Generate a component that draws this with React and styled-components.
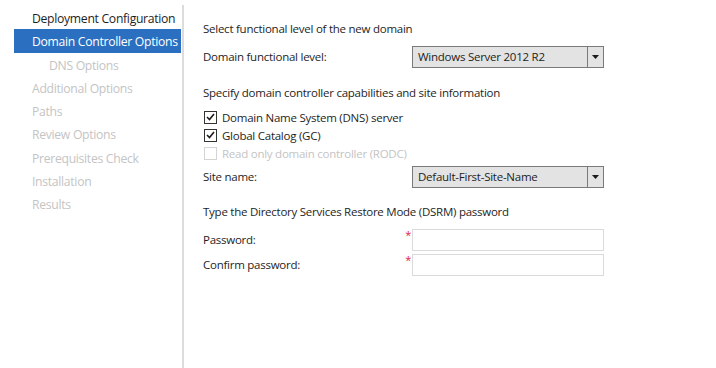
import React from 'react';
import styled, { createGlobalStyle } from 'styled-components';

const GlobalStyle = createGlobalStyle`
  html, body {
    margin: 0;
    padding: 0;
    background: #ffffff;
  }
  body {
    font-family: "Open Sans", "Noto Sans", sans-serif;
    color: #1e1e1e;
  }
`;

const Page = styled.div`
  display: flex;
  width: 716px;
  height: 368px;
  overflow: hidden;
`;

const Sidebar = styled.nav`
  width: 167px;
  margin-top: 5px;
  padding: 1px 1px 0 14px;
  border-right: 2px solid #dcdcdc;
  display: flex;
  flex-direction: column;
`;

const NavItem = styled.div`
  box-sizing: border-box;
  height: 23.3px;
  padding-top: 3px;
  line-height: 20px;
  padding-left: ${(p) => (p.$indent ? 35 : 18)}px;
  font-size: 12.2px;
  letter-spacing: -0.3px;
  white-space: nowrap;
  color: ${(p) => (p.$active ? '#ffffff' : p.$disabled ? '#c4c4c4' : '#1e1e1e')};
  background: ${(p) => (p.$active ? '#2b6fc1' : 'transparent')};
`;

const Main = styled.main`
  flex: 1;
  padding: 21px 0 0 19px;
  display: flex;
  flex-direction: column;
  font-size: 11.5px;
  letter-spacing: -0.25px;
`;

const Heading = styled.div`
  height: 16px;
  line-height: 16px;
  margin-top: ${(p) => p.$mt || 0}px;
`;

const FieldRow = styled.div`
  display: flex;
  align-items: center;
  height: 22px;
  margin-top: ${(p) => p.$mt || 0}px;
`;

const Label = styled.div`
  width: 209px;
  position: relative;
  line-height: 16px;
`;

const Required = styled.span`
  position: absolute;
  right: 1px;
  top: -5px;
  color: #e0204a;
  font-size: 11px;
`;

const Select = styled.div`
  box-sizing: border-box;
  width: 192px;
  height: 22px;
  display: flex;
  align-items: center;
  background: #e3e3e3;
  border: 1px solid #7a7a7a;
`;

const SelectValue = styled.div`
  flex: 1;
  padding-left: 5px;
  line-height: 20px;
  white-space: nowrap;
`;

const SelectArrow = styled.div`
  width: 15px;
  height: 20px;
  border-left: 1px solid #7a7a7a;
  display: flex;
  align-items: center;
  justify-content: center;
`;

const TextInput = styled.div`
  box-sizing: border-box;
  width: 192px;
  height: 22px;
  border: 1px solid #dadada;
  background: #ffffff;
`;

const CheckList = styled.div`
  display: flex;
  flex-direction: column;
  margin-top: ${(p) => p.$mt || 0}px;
`;

const CheckRow = styled.label`
  display: flex;
  align-items: center;
  height: 18px;
  gap: 5px;
  color: ${(p) => (p.$disabled ? '#c4c4c4' : '#1e1e1e')};
`;

const Box = styled.span`
  box-sizing: border-box;
  width: 13px;
  height: 13px;
  margin-left: 1px;
  border: 1px solid ${(p) => (p.$disabled ? '#d4d4d4' : '#333333')};
  background: #ffffff;
  display: flex;
  align-items: center;
  justify-content: center;
`;

const navItems = [
  { label: 'Deployment Configuration' },
  { label: 'Domain Controller Options', active: true },
  { label: 'DNS Options', indent: true, disabled: true },
  { label: 'Additional Options', disabled: true },
  { label: 'Paths', disabled: true },
  { label: 'Review Options', disabled: true },
  { label: 'Prerequisites Check', disabled: true },
  { label: 'Installation', disabled: true },
  { label: 'Results', disabled: true },
];

const Arrow = () => (
  <svg width="7" height="4" viewBox="0 0 7 4">
    <path d="M0 0h7L3.5 4z" fill="#1a1a1a" />
  </svg>
);

const Check = ({ checked, disabled, children }) => (
  <CheckRow $disabled={disabled}>
    <Box $disabled={disabled}>
      {checked && (
        <svg width="9" height="8" viewBox="0 0 9 8">
          <path d="M1 4l2.5 2.5L8 1" fill="none" stroke="#1a1a1a" strokeWidth="1.6" />
        </svg>
      )}
    </Box>
    {children}
  </CheckRow>
);

const Dropdown = ({ value }) => (
  <Select>
    <SelectValue>{value}</SelectValue>
    <SelectArrow>
      <Arrow />
    </SelectArrow>
  </Select>
);

const App = () => (
  <>
    <GlobalStyle />
    <Page>
      <Sidebar>
        {navItems.map((item) => (
          <NavItem
            key={item.label}
            $active={item.active}
            $disabled={item.disabled}
            $indent={item.indent}
          >
            {item.label}
          </NavItem>
        ))}
      </Sidebar>
      <Main>
        <Heading>Select functional level of the new domain</Heading>
        <FieldRow $mt={9}>
          <Label>Domain functional level:</Label>
          <Dropdown value="Windows Server 2012 R2" />
        </FieldRow>

        <Heading $mt={17}>Specify domain controller capabilities and site information</Heading>
        <CheckList $mt={7}>
          <Check checked>Domain Name System (DNS) server</Check>
          <Check checked>Global Catalog (GC)</Check>
          <Check disabled>Read only domain controller (RODC)</Check>
        </CheckList>
        <FieldRow $mt={4}>
          <Label>Site name:</Label>
          <Dropdown value="Default-First-Site-Name" />
        </FieldRow>

        <Heading $mt={16}>Type the Directory Services Restore Mode (DSRM) password</Heading>
        <FieldRow $mt={9}>
          <Label>
            Password:
            <Required>*</Required>
          </Label>
          <TextInput />
        </FieldRow>
        <FieldRow $mt={3}>
          <Label>
            Confirm password:
            <Required>*</Required>
          </Label>
          <TextInput />
        </FieldRow>
      </Main>
    </Page>
  </>
);

export default App;
